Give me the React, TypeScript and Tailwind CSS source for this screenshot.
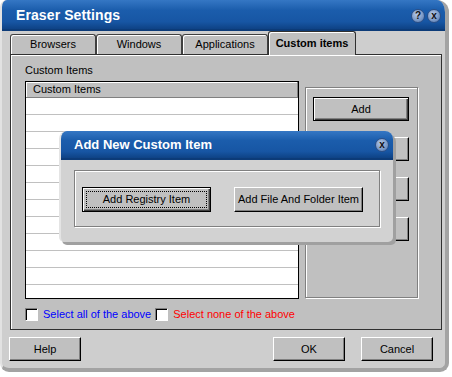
import type { ReactNode } from 'react';

const font = "font-['Liberation_Sans',Arial,sans-serif]";

function Btn({ children, w, isDefault, focus }: { children: ReactNode; w: string; isDefault?: boolean; focus?: boolean }) {
  const frame = isDefault
    ? 'border border-black shadow-[inset_1px_1px_0_#fff,inset_-1px_-1px_0_#404040,inset_-2px_-2px_0_#808080]'
    : 'border border-t-white border-l-white border-r-black border-b-black shadow-[inset_-1px_-1px_0_#808080]';
  return (
    <div className={`${w} relative flex items-center justify-center bg-[#c0c0c0] text-[11px] whitespace-nowrap text-black ${frame}`}>
      {focus && <div className="absolute inset-[3px] border border-dotted border-black" />}
      <span className="relative">{children}</span>
    </div>
  );
}

function CircleBtn({ glyph }: { glyph: string }) {
  return (
    <div className="w-[14px] h-[14px] rounded-full bg-[radial-gradient(circle_at_40%_35%,#b5c9e6,#6f8fc0_70%,#3f659e)] border border-[#2c4f86] flex items-center justify-center text-[10px] font-bold leading-none text-[#111]">
      {glyph}
    </div>
  );
}

function Tab({ label, active }: { label: string; active?: boolean }) {
  if (active) {
    return (
      <div className="relative z-10 w-[88px] h-[24px] -mb-px bg-[#c0c0c0] border border-b-0 border-[#303030] rounded-t-[3px] shadow-[inset_1px_1px_0_#fff] flex items-center justify-center text-[11px] font-bold text-black">
        {label}
      </div>
    );
  }
  return (
    <div className="w-[86px] h-[20px] bg-[#c0c0c0] border border-b-0 border-[#404040] rounded-t-[3px] shadow-[inset_1px_1px_0_#fff] flex items-center justify-center text-[11px] text-black">
      {label}
    </div>
  );
}

function Check() {
  return (
    <div className="w-[13px] h-[13px] bg-white border border-t-[#808080] border-l-[#808080] border-r-white border-b-white shadow-[inset_1px_1px_0_#000]" />
  );
}

export default function App() {
  return (
    <div className={`relative w-[452px] h-[377px] bg-white overflow-hidden ${font}`}>
      <div className="w-[449px] h-[372px] flex flex-col bg-[#cecece] rounded-tl-[7px] rounded-tr-[12px] rounded-b-[9px] border-r-[4px] border-b-[4px] border-[#a3a3a3] border-l-[2px] border-l-[#e2e2e2] overflow-hidden">
        {/* title bar */}
        <div className="h-[31px] flex-shrink-0 flex items-center justify-between pl-[14px] pr-[4px] pt-[2px] bg-[linear-gradient(#3577c4,#1b5dac_35%,#1756a4_75%,#0e4285)] border-b-[2px] border-[#0c3b78]">
          <span className="text-white font-bold text-[14px] tracking-[0.1px]">Eraser Settings</span>
          <div className="flex gap-[2px]">
            <CircleBtn glyph="?" />
            <CircleBtn glyph="x" />
          </div>
        </div>

        {/* tabs */}
        <div className="flex items-end h-[23px] ml-[8px]">
          <Tab label="Browsers" />
          <Tab label="Windows" />
          <Tab label="Applications" />
          <Tab label="Custom items" active />
        </div>

        {/* panel */}
        <div className="ml-[8px] w-[432px] h-[276px] flex-shrink-0 bg-[#c0c0c0] border border-[#303030] shadow-[inset_1px_1px_0_#fff] pl-[14px] pt-[9px] flex flex-col">
          <div className="flex gap-[6px]">
            <div className="flex flex-col w-[274px]">
              <div className="text-[11px] leading-[13px] text-black mb-[4px]">Custom Items</div>
              <div className="h-[218px] border border-black bg-white flex flex-col overflow-hidden">
                <div className="h-[16px] flex-shrink-0 bg-[#c0c0c0] border-r border-b border-[#808080] shadow-[inset_1px_1px_0_#fff] pl-[7px] flex items-center text-[11px] text-black">
                  Custom Items
                </div>
                {Array.from({ length: 12 }).map((_, i) => (
                  <div key={i} className="h-[17px] flex-shrink-0 border-b border-[#c0c0c0]" />
                ))}
              </div>
            </div>
            <div className="mt-[23px] w-[113px] h-[211px] border border-[#808080] shadow-[inset_1px_1px_0_#fff,1px_1px_0_#fff] flex flex-col gap-[16px] pl-[7px] pt-[9px]">
              <Btn w="w-[96px] h-[24px]" isDefault>Add</Btn>
              <Btn w="w-[96px] h-[24px]">Edit</Btn>
              <Btn w="w-[96px] h-[24px]">Remove</Btn>
              <Btn w="w-[96px] h-[24px]">Clear</Btn>
            </div>
          </div>
          <div className="flex items-center mt-[7px] text-[11px]">
            <Check />
            <span className="ml-[5px] text-[#0000ff]">Select all of the above</span>
            <div className="ml-[4px]"><Check /></div>
            <span className="ml-[5px] text-[#ff0000]">Select none of the above</span>
          </div>
        </div>

        {/* bottom buttons */}
        <div className="flex mt-[7px] pl-[7px]">
          <Btn w="w-[72px] h-[24px]">Help</Btn>
          <div className="ml-[192px] flex gap-[16px]">
            <Btn w="w-[72px] h-[24px]">OK</Btn>
            <Btn w="w-[72px] h-[24px]">Cancel</Btn>
          </div>
        </div>
      </div>

      {/* modal dialog */}
      <div className="absolute left-[59px] top-[131px] w-[334px] h-[111px] flex flex-col bg-[#d2d2d2] rounded-t-[8px] rounded-b-[5px] border-l-[2px] border-[#e4e4e4] shadow-[3px_3px_0_#a0a0a0] overflow-hidden">
        <div className="h-[29px] flex-shrink-0 flex items-center justify-between pl-[13px] pr-[4px] pt-[1px] bg-[linear-gradient(#3577c4,#1b5dac_35%,#1756a4_75%,#0e4285)] border-b-[2px] border-[#0c3b78]">
          <span className="text-white font-bold text-[13px]">Add New Custom Item</span>
          <CircleBtn glyph="x" />
        </div>
        <div className="pl-[13px] pt-[10px]">
          <div className="w-[306px] h-[57px] border border-[#808080] shadow-[inset_1px_1px_0_#fff,1px_1px_0_#fff] flex gap-[23px] pl-[7px] pt-[16px]">
            <Btn w="w-[129px] h-[25px]" isDefault focus>Add Registry Item</Btn>
            <Btn w="w-[129px] h-[25px]">Add File And Folder Item</Btn>
          </div>
        </div>
      </div>
    </div>
  );
}
